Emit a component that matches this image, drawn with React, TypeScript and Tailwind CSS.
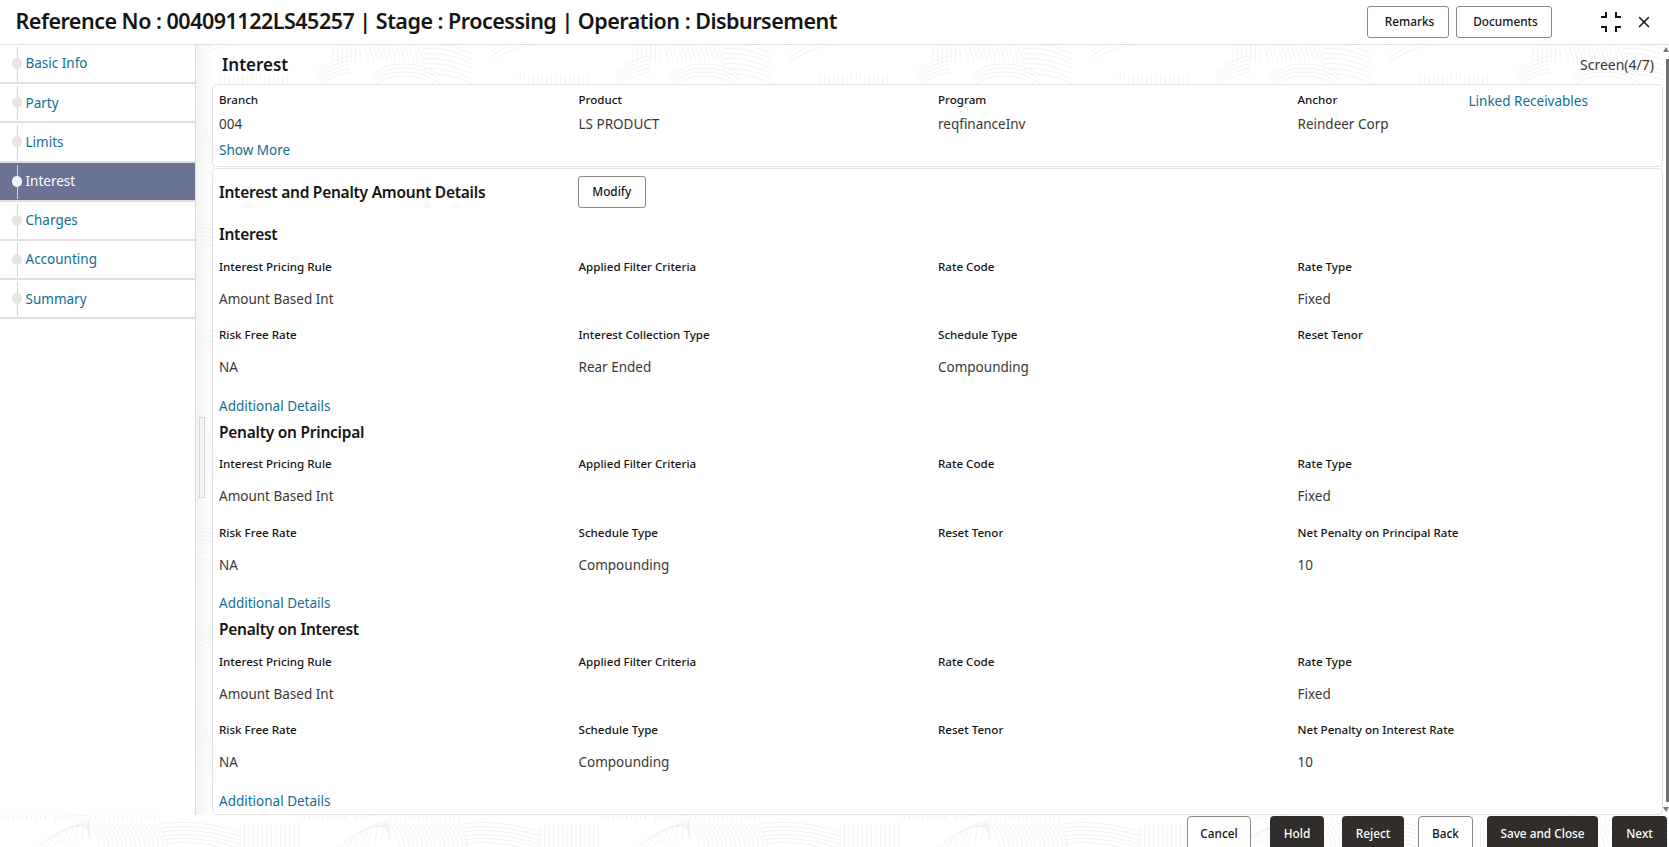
import { X } from "lucide-react";

const font = { fontFamily: '"Noto Sans", "Open Sans", sans-serif' };

const steps = ["Basic Info", "Party", "Limits", "Interest", "Charges", "Accounting", "Summary"];

const sections = [
  {
    title: "Interest",
    fields: [
      ["Interest Pricing Rule", "Amount Based Int"],
      ["Applied Filter Criteria", ""],
      ["Rate Code", ""],
      ["Rate Type", "Fixed"],
      ["Risk Free Rate", "NA"],
      ["Interest Collection Type", "Rear Ended"],
      ["Schedule Type", "Compounding"],
      ["Reset Tenor", ""],
    ],
  },
  {
    title: "Penalty on Principal",
    fields: [
      ["Interest Pricing Rule", "Amount Based Int"],
      ["Applied Filter Criteria", ""],
      ["Rate Code", ""],
      ["Rate Type", "Fixed"],
      ["Risk Free Rate", "NA"],
      ["Schedule Type", "Compounding"],
      ["Reset Tenor", ""],
      ["Net Penalty on Principal Rate", "10"],
    ],
  },
  {
    title: "Penalty on Interest",
    fields: [
      ["Interest Pricing Rule", "Amount Based Int"],
      ["Applied Filter Criteria", ""],
      ["Rate Code", ""],
      ["Rate Type", "Fixed"],
      ["Risk Free Rate", "NA"],
      ["Schedule Type", "Compounding"],
      ["Reset Tenor", ""],
      ["Net Penalty on Interest Rate", "10"],
    ],
  },
];

const summary = [
  ["Branch", "004"],
  ["Product", "LS PRODUCT"],
  ["Program", "reqfinanceInv"],
  ["Anchor", "Reindeer Corp"],
];

const footerButtons = [
  { label: "Cancel", dark: false, cls: "w-[64px] ml-0" },
  { label: "Hold", dark: true, cls: "w-[54px] ml-[19px]" },
  { label: "Reject", dark: true, cls: "w-[62px] ml-[18px]" },
  { label: "Back", dark: false, cls: "w-[55px] ml-[14px]" },
  { label: "Save and Close", dark: true, cls: "w-[111px] ml-[14px]" },
  { label: "Next", dark: true, cls: "w-[55px] ml-[14px]" },
];

const range = (n: number, step: number) => Array.from({ length: n }, (_, i) => i * step);

// tile of the faint fingerprint texture, 300 wide; the top band reads tile y 44-84, the footer tile y 215-247
const tilePaths = [
  // top band
  ...range(7, 4.5).map((d) => `M${33 + d} 44V62`),
  ...range(13, 4.5).map((d) => `M${63 + d} 44C${66 + d} 50 ${68 + d} 56 ${69 + d} 62`),
  ...range(7, 5).map((d) => `M123 ${44 + d}C138 ${42 + d} 156 ${46 + d} 172 ${54 + d}`),
  ...range(6, 5).map((d) => `M190 ${62 - d}C210 ${48 - d} 230 ${44 - d} 250 ${44 - d}`),
  ...range(16, 4.5).map((d) => `M${220 + d} 74V88`),
  ...range(5, 4).map((d) => `M17 ${88 - d}C26 ${80 - d} 38 ${74 - d} 50 ${72 - d}`),
  ...range(4, 4).map((d) => `M70 ${88 - d}C88 ${72 - d} 120 ${72 - d} 140 ${88 - d}`),
  // footer band
  ...range(11, 4.5).map((d) => `M${d} 215V220`),
  ...range(3, 3).map((d) => `M54 ${222 - d}C66 ${214 - d} 78 ${214 - d} 88 ${216 - d}`),
  ...range(16, 4.5).map((d) => `M${90 + d} 215C${91 + d} 218 ${92 + d} 220 ${92 + d} 222`),
  ...range(9, 5).map((d) => `M${33 + d * 1.4} ${250 - d * 0.3}C${50 + d} ${234 - d * 0.6} ${70 + d * 0.4} ${226 - d * 0.3} 90 ${224 + d * 0.4}`),
  ...range(16, 4.5).map((d) => `M${90 + d} 224C${96 + d} 232 ${100 + d} 240 ${100 + d} 250`),
  ...range(6, 4).map((d) => `M163 ${224 + d}C185 ${220 + d} 215 ${224 + d} 240 ${232 + d}`),
  ...range(14, 4.5).map((d) => `M${240 + d} 225V250`),
  // left gutter, x 195-212
  ...range(5, 7).map((d) => `M190 ${96 + d * 2}C200 ${110 + d * 2} 208 ${130 + d} 214 ${160 + d}`),
  ...range(5, 7).map((d) => `M190 ${260 + d}C198 ${250 + d} 206 ${250 + d} 214 ${256 + d}`),
];

// sits under the sidebar, content area and footer
const Texture = () => (
  <svg className="absolute inset-0 h-full w-full" aria-hidden="true">
    <defs>
      <pattern id="print" x="0" y="-45" width="300" height="300" patternUnits="userSpaceOnUse">
        <g fill="none" stroke="#f2f2f2" strokeWidth="1">
          {tilePaths.map((d, i) => (
            <path key={i} d={d} />
          ))}
        </g>
      </pattern>
    </defs>
    <rect width="100%" height="100%" fill="#ffffff" />
    <rect width="100%" height="100%" fill="url(#print)" />
  </svg>
);

const Field = ({ label, value }: { label: string; value: string }) => (
  <div>
    <div className="h-5 text-[11.6px] leading-5 font-medium text-[#161513]">{label}</div>
    <div className="mt-[12px] h-5 text-[13.5px] leading-5 text-[#3a3835]">{value}</div>
  </div>
);

const Step = ({ label, active }: { label: string; active: boolean }) => (
  <div
    className={`relative flex h-[39.2px] items-center border-b-2 border-[#dfdfdf] pl-[25.5px] text-[13.5px] ${
      active ? "bg-[#6a7394] text-white" : "text-[#0f6f93]"
    }`}
  >
    <span className="absolute top-[2px] bottom-[1px] left-[17px] w-px bg-[#d4d4d4]" />
    <span
      className={`absolute top-[13px] left-[12px] h-[11px] w-[10px] rounded-full ${
        active ? "bg-[#f4f4f4]" : "bg-[#e6e6e4]"
      }`}
    />
    {label}
  </div>
);

export default function App() {
  return (
    <div style={font} className="relative flex h-[847px] w-[1669px] flex-col overflow-hidden bg-white">
      <header className="flex h-[45px] shrink-0 items-center border-b border-[#e0e0e0] pl-[15.5px]">
        <h1 className="pb-[1px] text-[21.5px] font-semibold tracking-[-0.5px] whitespace-nowrap text-[#161513]">
          Reference No : 004091122LS45257 | Stage : Processing | Operation : Disbursement
        </h1>
        <div className="ml-auto flex items-center">
          <button className="h-[32px] w-[82px] rounded-[3px] border border-[#8a8886] pl-[3px] text-[11.8px] font-medium text-[#161513]">
            Remarks
          </button>
          <button className="ml-[7px] h-[32px] w-[96px] rounded-[3px] border border-[#8a8886] pl-[3px] text-[11.8px] font-medium text-[#161513]">
            Documents
          </button>
          <svg className="ml-[48px] h-[22px] w-[22px]" viewBox="0 0 22 22" fill="none" stroke="#161513" strokeWidth="2">
            <path d="M6 1v5H1M16 1v5h5M6 21v-5H1M16 21v-5h5" />
          </svg>
          <X className="mr-[16px] ml-[13px] h-[18px] w-[18px] text-[#161513]" strokeWidth={2} />
        </div>
      </header>

      <div className="relative flex min-h-0 flex-1 flex-col">
        <Texture />
        <div className="relative flex min-h-0 flex-1">
          <aside className="w-[196px] shrink-0 border-r border-[#dcdcdc] bg-white">
            {steps.map((s) => (
              <Step key={s} label={s} active={s === "Interest"} />
            ))}
          </aside>

          <main className="relative min-w-0 flex-1 pr-[6px] pl-[16px]">
            <span className="absolute top-0 bottom-0 left-0 w-[16px] bg-linear-to-r from-[#f3f3f3] to-transparent" />
            <span className="absolute top-[372px] left-[3px] h-[81px] w-[6px] border border-[#d6d6d6] bg-[#f4f4f4]" />
            <div className="flex h-[39px] items-center justify-between pr-[9px] pl-[10px]">
              <h2 className="text-[17px] font-semibold text-[#161513]">Interest</h2>
              <span className="pb-px text-[14px] text-[#3a3835]">Screen(4/7)</span>
            </div>

            <section className="h-[83px] rounded-[5px] border border-[#e2e2e2] bg-white pt-[5px] pl-[6px]">
              <div className="grid grid-cols-[359.5px_359.5px_359.5px_171px_1fr]">
                {summary.map(([label, value]) => (
                  <div key={label}>
                    <div className="h-5 text-[11.6px] leading-5 font-medium text-[#161513]">{label}</div>
                    <div className="mt-[3.5px] h-5 text-[13.5px] leading-5 text-[#3a3835]">{value}</div>
                  </div>
                ))}
                <a className="mt-[1px] text-[13.5px] leading-5 text-[#0f6f93]">Linked Receivables</a>
              </div>
              <a className="mt-[6.5px] block text-[13.5px] leading-5 text-[#0f6f93]">Show More</a>
            </section>

            <section className="mt-[1px] h-[647px] overflow-hidden rounded-[5px] border border-[#e2e2e2] bg-white pl-[6px]">
              <div className="mt-[7px] mb-[14px] grid h-[32px] grid-cols-[358.8px_1fr] items-center">
                <h3 className="pt-[2px] text-[15.5px] font-semibold tracking-[-0.25px] text-[#161513]">
                  Interest and Penalty Amount Details
                </h3>
                <button className="h-[32px] w-[68px] rounded-[3px] border border-[#8a8886] text-[11.8px] font-medium text-[#161513]">
                  Modify
                </button>
              </div>
              {sections.map((section) => (
                <div key={section.title} className="h-[197.5px]">
                  <h4 className="mb-[10.5px] h-[24px] text-[15.5px] leading-6 font-semibold tracking-[-0.25px] text-[#161513]">
                    {section.title}
                  </h4>
                  <div className="grid grid-cols-[repeat(4,359.5px)] auto-rows-[68.5px]">
                    {section.fields.map(([label, value]) => (
                      <Field key={label} label={label} value={value} />
                    ))}
                  </div>
                  <a className="block h-6 text-[13.5px] leading-6 text-[#0f6f93]">Additional Details</a>
                </div>
              ))}
            </section>

            {/* scrollbar */}
            <div className="absolute top-0 right-0 bottom-0 flex w-[6px] flex-col items-end bg-white">
              <span className="mt-[2px] h-0 w-0 border-x-[3px] border-b-[5px] border-x-transparent border-b-[#7a7a7a]" />
              <span className="mt-[7px] h-[743px] w-[3px] bg-[#6e6e6e]" />
              <span className="mt-[5px] h-0 w-0 border-x-[3px] border-t-[5px] border-x-transparent border-t-[#7a7a7a]" />
            </div>
          </main>
        </div>

        <footer className="relative flex h-[32px] shrink-0 justify-end pt-[1px] pr-[2px]">
          {footerButtons.map((b) => (
            <button
              key={b.label}
              className={`h-[36px] rounded-[4px] text-[11.8px] font-medium ${b.cls} ${
                b.dark ? "bg-[#312d2a] text-white" : "border border-[#8a8886] bg-white text-[#161513]"
              }`}
            >
              {b.label}
            </button>
          ))}
        </footer>
      </div>
    </div>
  );
}
